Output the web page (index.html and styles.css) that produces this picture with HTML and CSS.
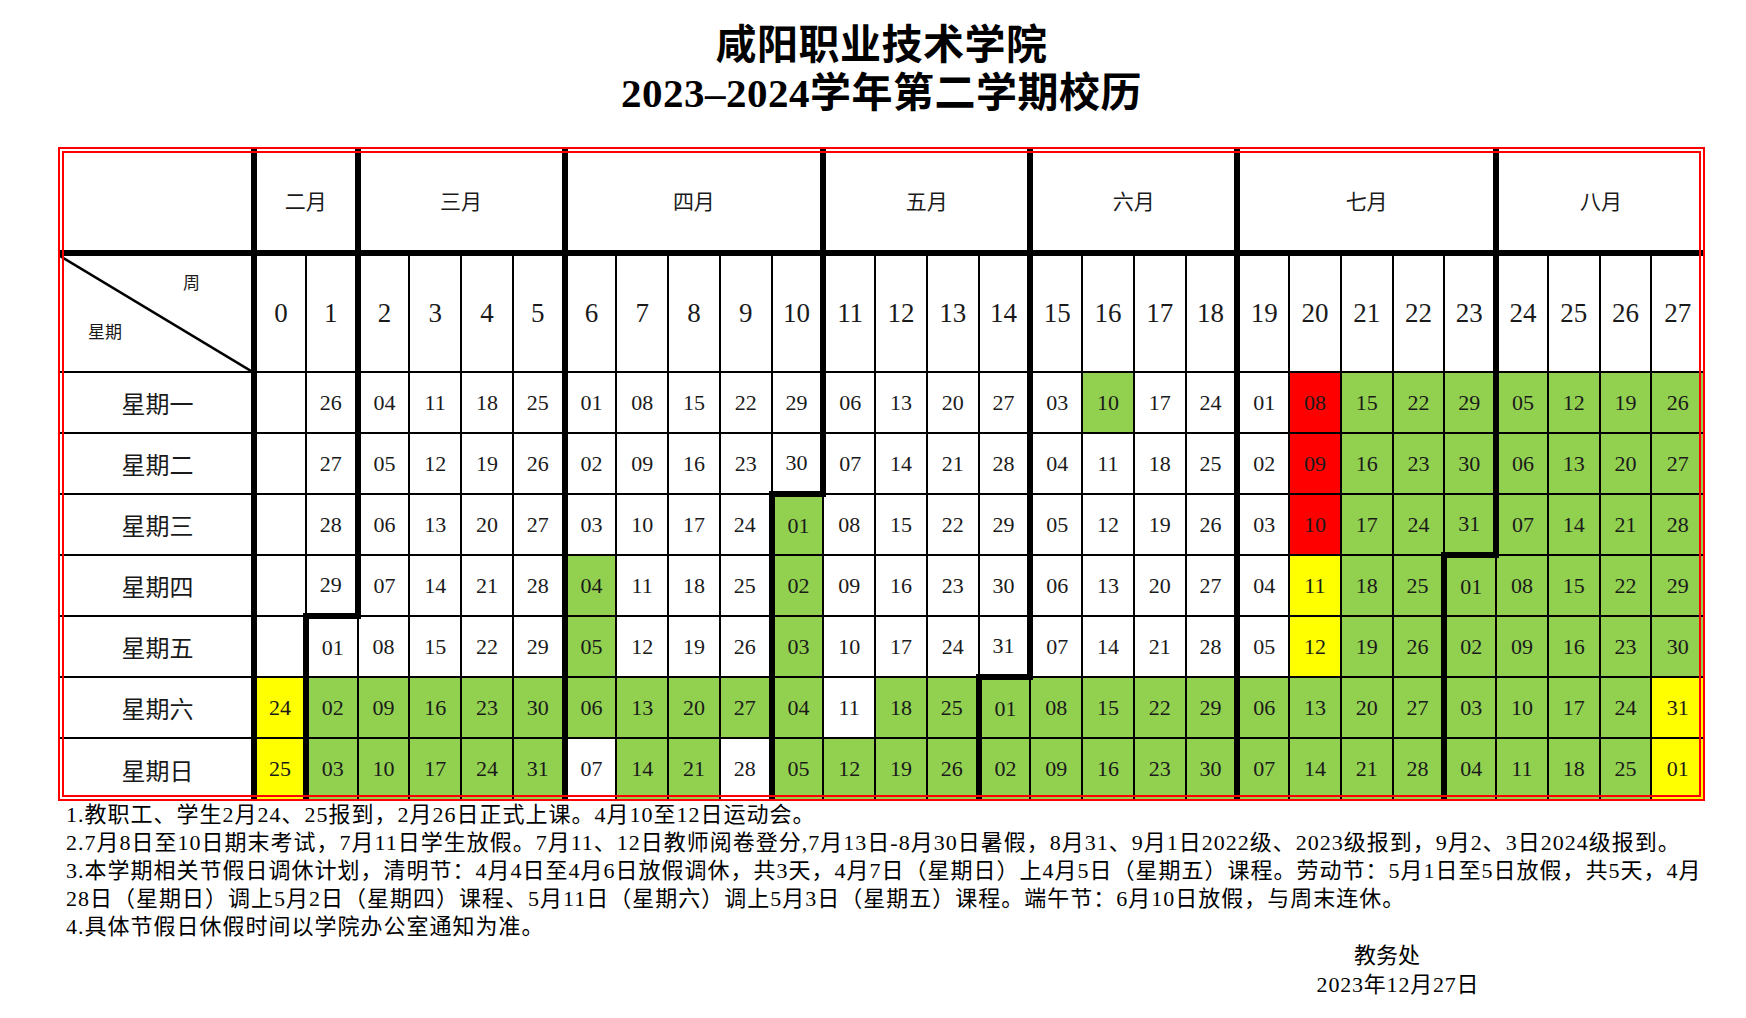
FILE: index.html
```html
<!DOCTYPE html>
<html lang="zh-CN">
<head>
<meta charset="utf-8">
<title>咸阳职业技术学院 2023-2024学年第二学期校历</title>
<link rel="stylesheet" href="styles.css">
</head>
<body>
<div class="page">
  <h1 class="title">咸阳职业技术学院<br>2023–2024学年第二学期校历</h1>
  <div class="frame">
    <table class="cal">
      <colgroup>
        <col class="c0">
        <col><col><col><col><col><col><col><col><col><col><col><col><col><col>
        <col><col><col><col><col><col><col><col><col><col><col><col><col><col>
      </colgroup>
      <tr class="mrow">
        <th></th>
        <th class="L" colspan="2">二月</th>
        <th class="L" colspan="4">三月</th>
        <th class="L" colspan="5">四月</th>
        <th class="L" colspan="4">五月</th>
        <th class="L" colspan="4">六月</th>
        <th class="L" colspan="5">七月</th>
        <th class="L" colspan="4">八月</th>
      </tr>
      <tr class="wrow">
        <th class="diag">
          <svg class="slash" width="100%" height="100%"><line x1="0" y1="0" x2="100%" y2="100%"/></svg>
          <span class="zhou">周</span>
          <span class="xq">星期</span>
        </th>
        <th class="L">0</th><th>1</th>
        <th class="L">2</th><th>3</th><th>4</th><th>5</th>
        <th class="L">6</th><th>7</th><th>8</th><th>9</th><th>10</th>
        <th class="L">11</th><th>12</th><th>13</th><th>14</th>
        <th class="L">15</th><th>16</th><th>17</th><th>18</th>
        <th class="L">19</th><th>20</th><th>21</th><th>22</th><th>23</th>
        <th class="L">24</th><th>25</th><th>26</th><th>27</th>
      </tr>
      <tr class="drow">
        <th class="lab">星期一</th>
        <td class="L"></td><td>26</td>
        <td class="L">04</td><td>11</td><td>18</td><td>25</td>
        <td class="L">01</td><td>08</td><td>15</td><td>22</td><td>29</td>
        <td class="L">06</td><td>13</td><td>20</td><td>27</td>
        <td class="L">03</td><td class="g">10</td><td>17</td><td>24</td>
        <td class="L">01</td><td class="r">08</td><td class="g">15</td><td class="g">22</td><td class="g">29</td>
        <td class="g L">05</td><td class="g">12</td><td class="g">19</td><td class="g">26</td>
      </tr>
      <tr class="drow">
        <th class="lab">星期二</th>
        <td class="L"></td><td>27</td>
        <td class="L">05</td><td>12</td><td>19</td><td>26</td>
        <td class="L">02</td><td>09</td><td>16</td><td>23</td><td>30</td>
        <td class="L">07</td><td>14</td><td>21</td><td>28</td>
        <td class="L">04</td><td>11</td><td>18</td><td>25</td>
        <td class="L">02</td><td class="r">09</td><td class="g">16</td><td class="g">23</td><td class="g">30</td>
        <td class="g L">06</td><td class="g">13</td><td class="g">20</td><td class="g">27</td>
      </tr>
      <tr class="drow">
        <th class="lab">星期三</th>
        <td class="L"></td><td>28</td>
        <td class="L">06</td><td>13</td><td>20</td><td>27</td>
        <td class="L">03</td><td>10</td><td>17</td><td>24</td><td class="g L T">01</td>
        <td>08</td><td>15</td><td>22</td><td>29</td>
        <td class="L">05</td><td>12</td><td>19</td><td>26</td>
        <td class="L">03</td><td class="r">10</td><td class="g">17</td><td class="g">24</td><td class="g">31</td>
        <td class="g L">07</td><td class="g">14</td><td class="g">21</td><td class="g">28</td>
      </tr>
      <tr class="drow">
        <th class="lab">星期四</th>
        <td class="L"></td><td>29</td>
        <td class="L">07</td><td>14</td><td>21</td><td>28</td>
        <td class="g L">04</td><td>11</td><td>18</td><td>25</td><td class="g L">02</td>
        <td>09</td><td>16</td><td>23</td><td>30</td>
        <td class="L">06</td><td>13</td><td>20</td><td>27</td>
        <td class="L">04</td><td class="y">11</td><td class="g">18</td><td class="g">25</td><td class="g L T">01</td>
        <td class="g">08</td><td class="g">15</td><td class="g">22</td><td class="g">29</td>
      </tr>
      <tr class="drow">
        <th class="lab">星期五</th>
        <td class="L"></td><td class="L T">01</td>
        <td>08</td><td>15</td><td>22</td><td>29</td>
        <td class="g L">05</td><td>12</td><td>19</td><td>26</td><td class="g L">03</td>
        <td>10</td><td>17</td><td>24</td><td>31</td>
        <td class="L">07</td><td>14</td><td>21</td><td>28</td>
        <td class="L">05</td><td class="y">12</td><td class="g">19</td><td class="g">26</td><td class="g L">02</td>
        <td class="g">09</td><td class="g">16</td><td class="g">23</td><td class="g">30</td>
      </tr>
      <tr class="drow">
        <th class="lab">星期六</th>
        <td class="y L">24</td><td class="g L">02</td>
        <td class="g">09</td><td class="g">16</td><td class="g">23</td><td class="g">30</td>
        <td class="g L">06</td><td class="g">13</td><td class="g">20</td><td class="g">27</td><td class="g L">04</td>
        <td>11</td><td class="g">18</td><td class="g">25</td><td class="g L T">01</td>
        <td class="g">08</td><td class="g">15</td><td class="g">22</td><td class="g">29</td>
        <td class="g L">06</td><td class="g">13</td><td class="g">20</td><td class="g">27</td><td class="g L">03</td>
        <td class="g">10</td><td class="g">17</td><td class="g">24</td><td class="y">31</td>
      </tr>
      <tr class="drow">
        <th class="lab">星期日</th>
        <td class="y L">25</td><td class="g L">03</td>
        <td class="g">10</td><td class="g">17</td><td class="g">24</td><td class="g">31</td>
        <td class="L">07</td><td class="g">14</td><td class="g">21</td><td>28</td><td class="g L">05</td>
        <td class="g">12</td><td class="g">19</td><td class="g">26</td><td class="g L">02</td>
        <td class="g">09</td><td class="g">16</td><td class="g">23</td><td class="g">30</td>
        <td class="g L">07</td><td class="g">14</td><td class="g">21</td><td class="g">28</td><td class="g L">04</td>
        <td class="g">11</td><td class="g">18</td><td class="g">25</td><td class="y">01</td>
      </tr>
    </table>
  </div>
  <div class="notes">
    <p>1.教职工、学生2月24、25报到，2月26日正式上课。4月10至12日运动会。</p>
    <p>2.7月8日至10日期末考试，7月11日学生放假。7月11、12日教师阅卷登分,7月13日-8月30日暑假，8月31、9月1日2022级、2023级报到，9月2、3日2024级报到。</p>
    <p>3.本学期相关节假日调休计划，清明节：4月4日至4月6日放假调休，共3天，4月7日（星期日）上4月5日（星期五）课程。劳动节：5月1日至5日放假，共5天，4月</p>
    <p>28日（星期日）调上5月2日（星期四）课程、5月11日（星期六）调上5月3日（星期五）课程。端午节：6月10日放假，与周末连休。</p>
    <p>4.具体节假日休假时间以学院办公室通知为准。</p>
  </div>
  <div class="sign">
    <p class="dept">教务处</p>
    <p class="date">2023年12月27日</p>
  </div>
</div>
</body>
</html>
```

FILE: styles.css
```css
* { box-sizing: border-box; }

body {
  margin: 0;
  background: #fff;
  color: #000;
  font-family: "Liberation Serif", "Noto Sans CJK SC", serif;
}

.page {
  width: 1647px;
  margin-left: 58px;
}

.title {
  margin: 0 0 30px;
  padding-top: 21px;
  text-align: center;
  font-size: 41px;
  line-height: 48px;
  font-weight: bold;
  letter-spacing: 0.5px;
}

.frame {
  position: relative;
  width: 1647px;
  border: 2px solid #f00;
}

.frame::after {
  content: "";
  position: absolute;
  inset: 2px;
  border: 2px solid #f00;
  pointer-events: none;
}

.cal {
  width: 1643px;
  table-layout: fixed;
  border-collapse: collapse;
  border-style: hidden;
}

.c0 { width: 194px; }

.cal th,
.cal td {
  border: 2px solid #000;
  padding: 0;
  text-align: center;
  vertical-align: middle;
  font-weight: normal;
  color: #1a1a1a;
}

.cal .L { border-left: 6px solid #000; }
.cal .T { border-top: 6px solid #000; }

.mrow { height: 104px; }
.mrow th {
  border-bottom: 6px solid #000;
  font-family: "Noto Sans CJK SC", sans-serif;
  font-size: 21px;
}

.wrow { height: 119px; }
.wrow th {
  font-size: 27px;
}

.drow { height: 61px; }
.drow td {
  font-size: 22px;
}

.lab {
  font-family: "Noto Sans CJK SC", sans-serif;
  font-size: 24px;
  padding-left: 4px !important;
}

.diag {
  position: relative;
}

.slash {
  position: absolute;
  left: 0;
  top: 0;
  display: block;
}

.slash line {
  stroke: #000;
  stroke-width: 2.5;
}

.zhou,
.xq {
  position: absolute;
  font-family: "Noto Sans CJK SC", sans-serif;
  font-size: 17px;
  line-height: 20px;
}

.zhou { left: 123px; top: 16px; }
.xq { left: 28px; top: 65px; }

.g { background: #92d050; }
.y { background: #ffff00; }
.r { background: #ff0000; }

.notes {
  padding-left: 8px;
  font-size: 22px;
  line-height: 28px;
  letter-spacing: 1px;
}

.notes p,
.sign p {
  margin: 0;
  white-space: nowrap;
}

.sign {
  display: flex;
  flex-direction: column;
  align-items: center;
  width: 200px;
  margin-left: 1240px;
  font-size: 22px;
  line-height: 29px;
}

.sign .dept { padding-right: 22px; }
.sign .date { letter-spacing: 0.8px; }
```
